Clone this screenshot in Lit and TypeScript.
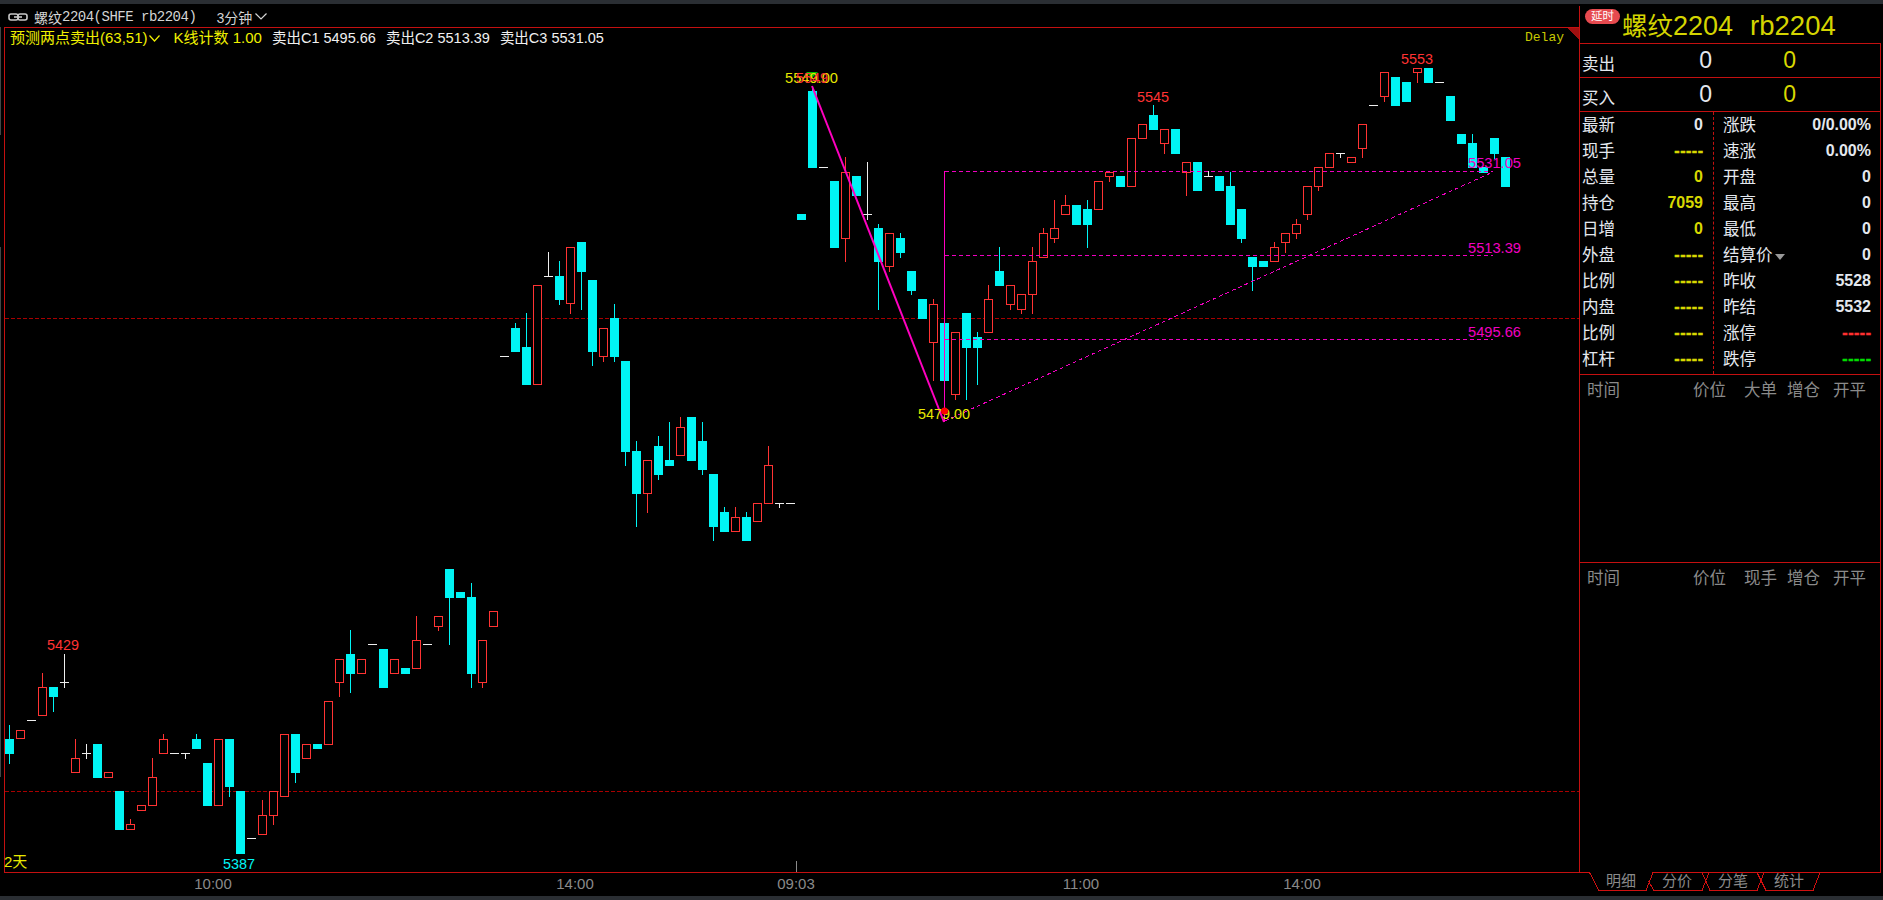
import { LitElement, html, css, svg } from "lit";
import { customElement } from "lit/decorators.js";

type C = [string, number, number, number?, number?];
// [type, body top, body bottom, wick top, wick bottom]; for 'w', body top is the dash
const D: C[] = [
  ["c",739,754,725,764],["r",730,739],["w",720,720],["r",687,716,673],["c",687,697,0,712],["w",682,682,654,688],
  ["r",758,773,739],["w",753,753,744,759],["c",744,778],["r",772,778],["c",791,830],["r",824,830,819],
  ["r",805,811],["r",777,806,758],["r",739,754,734],["w",753,753],["w",753,753,0,759],["c",739,749,734],
  ["c",763,806],["r",739,806],["c",739,787,0,797],["c",791,854],["w",838,838],["r",815,835,800],
  ["r",791,816,0,825],["r",734,797],["c",734,773,0,783],["r",744,759],["c",744,749],["r",701,745],
  ["r",659,683,0,697],["c",654,674,630,693],["r",659,674],["w",644,644],["c",649,688],["r",659,674],
  ["c",668,674],["r",640,669,616],["w",644,644],["r",616,627,0,631],["c",569,598,0,645],["c",592,598],
  ["c",597,674,583,688],["r",640,683,0,688],["r",611,627],["w",356,356],["c",328,352,323],["c",347,385,313],
  ["r",285,385],["w",276,276,252],["c",276,300,261,305],["r",247,304,0,314],["c",242,272,0,310],["c",280,352,0,366],
  ["r",328,357,0,362],["c",318,357,304,362],["c",361,452,0,466],["c",451,494,441,527],["r",460,494,0,513],["c",446,475,436,480],
  ["c",460,466,422],["r",427,456,417],["c",417,461],["c",441,470,422,475],["c",474,527,0,541],["c",512,532,507],
  ["r",517,532,507],["c",517,541,512],["r",503,522],["r",465,504,446],["w",503,503,0,508],["w",503,503],
  ["c",214,220],["c",91,168,87],["w",167,167],["c",181,248],["r",172,239,157,262],["c",176,196],
  ["w",214,214,162,220],["c",228,262,224,310],["r",233,267,0,272],["c",238,253,233,258],["c",271,291,0,295],["c",299,319],
  ["r",304,343,299,381],["c",323,381],["r",332,395,0,400],["c",313,348,0,400],["c",337,348,332,385],["r",299,333,285],
  ["c",271,286,247],["r",285,305,0,310],["r",294,310,0,314],["r",261,295,247,314],["r",233,258,228],["r",228,239,200,243],
  ["r",205,215,195],["c",205,225],["c",209,225,200,248],["r",181,210],["r",172,177,0,182],["c",176,187],
  ["r",138,187],["r",124,139],["c",115,130,105],["r",129,144,0,154],["c",129,154],["r",162,173,0,196],
  ["c",162,191],["w",176,176,171],["c",176,191],["c",186,225,172],["c",209,239,0,243],["c",257,267,0,291],
  ["c",261,267],["r",247,262,242],["r",233,243,0,253],["r",224,234,219,239],["r",186,215,0,220],["r",167,187,0,191],
  ["r",153,168],["w",153,153,0,158],["r",157,163],["r",124,149,0,158],["w",105,105],["r",72,97,0,102],
  ["c",77,106],["c",82,102],["r",68,73,0,83],["c",68,83],["w",82,82],["c",96,121],
  ["c",134,144],["c",143,168,134],["c",167,173],["c",138,154,0,159],["c",157,187],
];

type Lab = [number, number, number, string, string];
const LABELS: Lab[] = [
  [785, 83, 53, "5549.00", "ty"], [796, 83, 32, "5549", "tr"], [47, 650, 32, "5429", "tr"],
  [223, 869, 32, "5387", "tc"], [1137, 102, 32, "5545", "tr"], [1401, 64, 32, "5553", "tr"],
  [1468, 168, 53, "5531.05", "tp"], [1468, 253, 53, "5513.39", "tp"], [1468, 337, 53, "5495.66", "tp"],
  [918, 419, 52, "5479.00", "ty"],
];
const AXIS: [number, string][] = [[213, "10:00"], [575, "14:00"], [796, "09:03"], [1081, "11:00"], [1302, "14:00"]];

const LEFT: [string, string, string][] = [
  ["最新", "0", "w"], ["现手", "-----", "y"], ["总量", "0", "y"], ["持仓", "7059", "y"], ["日增", "0", "y"],
  ["外盘", "-----", "y"], ["比例", "-----", "y"], ["内盘", "-----", "y"], ["比例", "-----", "y"], ["杠杆", "-----", "y"],
];
const RIGHT: [string, string, string][] = [
  ["涨跌", "0/0.00%", "w"], ["速涨", "0.00%", "w"], ["开盘", "0", "w"], ["最高", "0", "w"], ["最低", "0", "w"],
  ["结算价", "0", "w"], ["昨收", "5528", "w"], ["昨结", "5532", "w"], ["涨停", "-----", "r"], ["跌停", "-----", "g"],
];

@customElement("app-root")
export class AppRoot extends LitElement {
  static styles = css`
    :host { display: block; width: 1883px; height: 900px; background: #000; overflow: hidden;
      font-family: "Liberation Sans", "Noto Sans CJK SC", sans-serif; color: #e4e8ee; }
    .strip { height: 4px; background: #2a2e33; }
    .body { display: flex; height: 892px; }
    .left { width: 1579px; position: relative; display: flex; flex-direction: column; }
    .titlebar { height: 23px; display: flex; align-items: center; padding: 2px 0 0 8px; box-sizing: border-box; color: #d4d4d4; }
    .cjk { font-size: 14px; font-family: "Noto Sans CJK SC", sans-serif; }
    .mono { font: 14px "Liberation Mono", monospace; letter-spacing: -0.5px; }
    .chain { margin-right: 6px; }
    .period { margin-left: 20px; display: flex; align-items: center; gap: 3px; }
    .chart { display: block; width: 1579px; height: 869px; }
    .legend { position: absolute; left: 10px; top: 25px; height: 18px; display: flex; align-items: center;
      font-size: 15px; line-height: 18px; white-space: nowrap; color: #f0f0f0; }
    .legend .it { margin-right: 10px; font-size: 14.5px; }
    .legend .yl { color: #f0f000; font-size: 15px; }
    .legend svg { margin: 0 14px 0 1px; }
    .right { width: 304px; display: flex; flex-direction: column; }
    .panel { width: 302px; height: 868px; display: flex; flex-direction: column; box-sizing: border-box; }
    .hdr { height: 40px; box-sizing: border-box; border-left: 1px solid #c41010; border-bottom: 1px solid #c41010;
      display: flex; align-items: flex-start; padding-left: 5px; position: relative; }
    .hdr::before { content: ""; position: absolute; left: -1px; top: 0; width: 1px; height: 2px; background: #000; }
    .badge { width: 35px; height: 15px; margin-top: 5px; border-radius: 8px; background: #e64a4f; color: #fff;
      font-size: 11.5px; line-height: 15px; text-align: center; }
    .prod { margin-left: 2px; margin-top: 5px; font-size: 27px; line-height: 30px; color: #d4d400; white-space: nowrap; }
    .prod .zh { font-size: 25.5px; font-family: "Noto Sans CJK SC", sans-serif; }
    .prod .code { margin-left: 17px; font-size: 27.5px; }
    .row { border: 1px solid #c41010; border-width: 0 1px 1px; height: 34px; box-sizing: border-box;
      display: grid; grid-template-columns: 40px 92px 84px; }
    .row .lab { font-size: 16.5px; padding: 8px 0 0 2px; line-height: 22px; font-family: "Noto Sans CJK SC", sans-serif; }
    .row .num { font-size: 23px; line-height: 33px; text-align: right; }
    .row .yl { color: #d8d800; }
    .stats { height: 263px; box-sizing: border-box; border: 1px solid #c41010; border-width: 0 1px 1px;
      display: grid; grid-template-columns: 133px 1fr; }
    .col { padding-bottom: 2px; }
    .col.b { border-left: 1px dashed #c41010; }
    .st { height: 26px; display: flex; justify-content: space-between; align-items: center; padding: 0 10px 0 2px; }
    .col.b .st { padding: 0 9px 0 9px; }
    .st .k { font-size: 16.5px; padding-bottom: 3px; font-family: "Noto Sans CJK SC", sans-serif; display: flex; align-items: center; }
    .st .k svg { margin-left: 2px; margin-top: 7px; }
    .st .v { font-size: 16px; font-weight: 700; }
    .st .v.dash { letter-spacing: 0.5px; margin-right: -0.5px; -webkit-text-stroke: 0.5px currentColor; }
    .v.y { color: #d8d800; } .v.w { color: #e4e8ee; } .v.r { color: #ff3030; } .v.g { color: #00dc00; }
    .sec { border: 1px solid #c41010; border-width: 0 1px 1px; height: 188px; box-sizing: border-box; }
    .sec.last { border-bottom: 0; height: 309px; }
    .sechead { display: grid; grid-template-columns: 106px 51px 43px 46px auto; padding-left: 7px; line-height: 29px;
      font-size: 16.5px; color: #8a8a8a; font-family: "Noto Sans CJK SC", sans-serif; }
    .tabs { display: block; width: 304px; height: 28px; margin-top: -4px; }
    .tabtext { fill: #8a8a8a; font: 15px "Noto Sans CJK SC", sans-serif; text-anchor: middle; }
    .tabline { fill: none; stroke: #d01010; stroke-width: 1; }
    .tl { font: 15px "Liberation Sans", sans-serif; }
    .ty { fill: #e8e800; } .tr { fill: #ff3333; } .tc { fill: #00f5f5; } .tp { fill: #f000c0; }
    .ax { font: 15px "Liberation Sans", sans-serif; fill: #8a8a8a; text-anchor: middle; }
    .cn { font: 15px "Liberation Sans", "Noto Sans CJK SC", sans-serif; fill: #e8e800; }
    .dl { font: 13px "Liberation Mono", monospace; fill: #c8c800; }
    .fr { fill: #c41010; }
    .edge { fill: #444; }
    .wk-c, .bd-c { fill: #00f5f5; }
    .wk-r { fill: #ff3333; }
    .wk-w { fill: #eeeeee; }
    .bd-r { fill: #000; stroke: #ff3333; stroke-width: 1; }
    .crisp { shape-rendering: crispEdges; }
    .dash-r { stroke: #a80000; stroke-width: 1; stroke-dasharray: 4 2; }
    .dash-p { stroke: #f000c0; stroke-width: 1; stroke-dasharray: 4 3; fill: none; }
    .sol-p { stroke: #ff00c0; fill: none; }
    .tri { fill: #00c000; }
    .dot { fill: #ff0000; }
    .tri-r { fill: #a01010; }
    .tick { fill: #8a8a8a; }
  `;

  private candle(d: C, i: number) {
    const cx = 9.5 + 11 * i;
    const [t, top, bot, wt, wb] = d;
    const lx = cx - 0.5;
    const parts = [];
    if (wt) parts.push(svg`<rect class="wk-${t}" x=${lx} y=${wt} width="1" height=${top - wt}></rect>`);
    if (wb) parts.push(svg`<rect class="wk-${t}" x=${lx} y=${bot} width="1" height=${wb - bot}></rect>`);
    if (t === "w") parts.push(svg`<rect class="wk-w" x=${cx - 4.5} y=${top} width="9" height="1"></rect>`);
    if (t === "c") parts.push(svg`<rect class="bd-c" x=${cx - 4.5} y=${top} width="9" height=${bot - top}></rect>`);
    if (t === "r") parts.push(svg`<rect class="bd-r" x=${cx - 4} y=${top + 0.5} width="8" height=${bot - top - 1}></rect>`);
    return parts;
  }

  private chart() {
    return html`<svg class="chart" viewBox="0 27 1579 869">
      <g class="crisp">
        <rect class="edge" x="0" y="27" width="1" height="108"></rect>
        <rect class="edge" x="0" y="247" width="1" height="530"></rect>
        <rect class="fr" x="4" y="27" width="1575" height="1"></rect>
        <rect class="fr" x="4" y="27" width="1" height="846"></rect>
        <rect class="fr" x="4" y="872" width="1575" height="1"></rect>
        <polygon class="tri-r" points="1567,28 1579,28 1579,40"></polygon>
        <rect class="tick" x="796" y="861" width="1" height="11"></rect>
        <line class="dash-r" x1="5" y1="318.5" x2="1579" y2="318.5"></line>
        <line class="dash-r" x1="5" y1="791.5" x2="1579" y2="791.5"></line>
        ${D.map((d, i) => this.candle(d, i))}
        <line class="dash-p" x1="945" y1="171.5" x2="1493" y2="171.5"></line>
        <line class="dash-p" x1="945" y1="255.5" x2="1493" y2="255.5"></line>
        <line class="dash-p" x1="945" y1="339.5" x2="1493" y2="339.5"></line>
        <line class="dash-p" x1="945" y1="421" x2="1493" y2="172"></line>
        <line class="sol-p" stroke-width="1" x1="944.5" y1="171" x2="944.5" y2="422"></line>
      </g>
      <line class="sol-p" stroke-width="2" x1="812" y1="86" x2="944" y2="422"></line>
      <polygon class="tri" points="806,72 818,72 812,78"></polygon>
      ${LABELS.map(([x, y, w, s, c]) => svg`<text class="tl ${c}" x=${x} y=${y} textLength=${w} lengthAdjust="spacingAndGlyphs">${s}</text>`)}
      <circle class="dot" cx="944.5" cy="411" r="3.5"></circle>
      <text class="dl" x="1525" y="41" textLength="39" lengthAdjust="spacingAndGlyphs">Delay</text>
      <text class="cn" x="4" y="867">2天</text>
      ${AXIS.map(([x, s]) => svg`<text class="ax" x=${x} y="889">${s}</text>`)}
    </svg>`;
  }

  private stat(list: [string, string, string][], cls: string) {
    return html`<div class="col ${cls}">
      ${list.map(([k, v, c]) => html`<div class="st">
        <span class="k">${k}${k === "结算价"
          ? html`<svg width="10" height="6" viewBox="0 0 10 6"><polygon points="0,0 10,0 5,6" fill="#999"></polygon></svg>`
          : ""}</span>
        <span class="v ${c} ${v === "-----" ? "dash" : ""}">${v}</span>
      </div>`)}
    </div>`;
  }

  private head(cols: string[], last = false) {
    return html`<div class="sec ${last ? "last" : ""}"><div class="sechead">${cols.map((c) => html`<span>${c}</span>`)}</div></div>`;
  }

  render() {
    return html`
      <div class="strip"></div>
      <div class="body">
        <div class="left">
          <div class="titlebar">
            <svg class="chain" width="20" height="8" viewBox="0 0 20 8" fill="none" stroke="#c8c8c8" stroke-width="1.6">
              <rect x="1" y="1" width="9" height="6" rx="2"></rect>
              <rect x="10" y="1" width="9" height="6" rx="2"></rect>
              <line x1="6" y1="4" x2="14" y2="4"></line>
            </svg>
            <span class="cjk">螺纹</span><span class="mono">2204(SHFE rb2204)</span>
            <span class="period"><span><span class="mono">3</span><span class="cjk">分钟</span></span>
              <svg width="12" height="7" viewBox="0 0 12 7" fill="none" stroke="#d4d4d4" stroke-width="1.2"><polyline points="0.5,0.5 6,6 11.5,0.5"></polyline></svg>
            </span>
          </div>
          ${this.chart()}
          <div class="legend">
            <span class="yl">预测两点卖出(63,51)</span>
            <svg width="11" height="7" viewBox="0 0 11 7" fill="none" stroke="#f0f000" stroke-width="1.2"><polyline points="0.5,0.5 5.5,6 10.5,0.5"></polyline></svg>
            <span class="it yl">K线计数 1.00</span>
            <span class="it">卖出C1 5495.66</span>
            <span class="it">卖出C2 5513.39</span>
            <span class="it">卖出C3 5531.05</span>
          </div>
        </div>
        <div class="right">
          <div class="panel">
            <div class="hdr">
              <div class="badge">延时</div>
              <div class="prod"><span class="zh">螺纹</span>2204<span class="code">rb2204</span></div>
            </div>
            <div class="row"><span class="lab">卖出</span><span class="num">0</span><span class="num yl">0</span></div>
            <div class="row"><span class="lab">买入</span><span class="num">0</span><span class="num yl">0</span></div>
            <div class="stats">${this.stat(LEFT, "a")}${this.stat(RIGHT, "b")}</div>
            ${this.head(["时间", "价位", "大单", "增仓", "开平"])}
            ${this.head(["时间", "价位", "现手", "增仓", "开平"], true)}
          </div>
          <svg class="tabs" viewBox="0 -4 304 28">
            <g class="crisp">
              <polyline class="tabline" points="0,0.5 10.5,0.5 20,18.5 67,18.5 74,0.5 301.5,0.5 301.5,0"></polyline>
              <polyline class="tabline" points="69.5,9.5 75,18.5 123,18.5 130,0.5"></polyline>
              <polyline class="tabline" points="123,0.5 131,18.5 178,18.5 185,0.5"></polyline>
              <polyline class="tabline" points="178,0.5 187,18.5 234,18.5 241,0.5"></polyline>
            </g>
            <text class="tabtext" x="42" y="13.5">明细</text>
            <text class="tabtext" x="98" y="13.5">分价</text>
            <text class="tabtext" x="154" y="13.5">分笔</text>
            <text class="tabtext" x="210" y="13.5">统计</text>
          </svg>
        </div>
      </div>
      <div class="strip"></div>
    `;
  }
}
